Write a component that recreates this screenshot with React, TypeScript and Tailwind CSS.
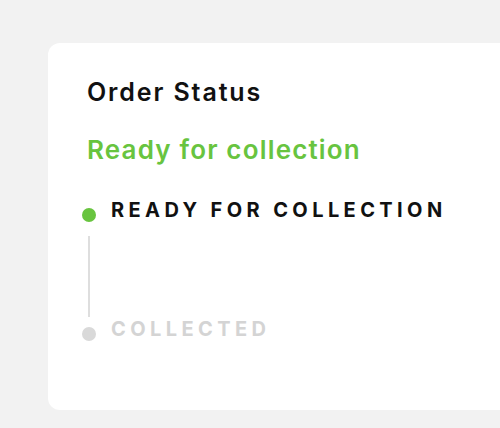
import React from 'react'

interface StepProps {
  label: string
  active?: boolean
}

const Step: React.FC<StepProps> = ({ label, active }) => {
  return (
    <div className="flex items-start gap-[15px]">
      <span
        className={
          active
            ? 'mt-[8px] h-[14px] w-[14px] shrink-0 rounded-full bg-[#68c43f]'
            : 'mt-[8px] h-[14px] w-[14px] shrink-0 rounded-full bg-[#d9d9d9]'
        }
      />
      <span
        className={
          active
            ? 'text-[20px] leading-[20px] font-bold tracking-[0.22em] text-[#111111]'
            : 'text-[20px] leading-[20px] font-bold tracking-[0.22em] text-[#d4d4d4]'
        }
      >
        {label}
      </span>
    </div>
  )
}

export default function App() {
  return (
    <div
      className="w-[500px] h-[428px] overflow-hidden bg-[#f2f2f2] pt-[43px] pl-[48px]"
      style={{ fontFamily: 'Inter, "Noto Sans", sans-serif' }}
    >
      <div className="w-[480px] h-[367px] rounded-[12px] bg-white pt-[37px] pl-[39px]">
        <h2 className="text-[25px] leading-[25px] font-semibold tracking-[0.075em] text-[#111111]">
          Order Status
        </h2>
        <p className="mt-[32px] text-[26px] leading-[26px] font-semibold tracking-[0.045em] text-[#68c43f]">
          Ready for collection
        </p>

        {/* timeline */}
        <div className="mt-[37px] -ml-[5px] flex flex-col">
          <Step label="READY FOR COLLECTION" active />
          <div className="ml-[6px] mt-[14px] h-[81px] w-[2px] bg-[#dedede]" />
          <div className="mt-[2px]">
            <Step label="COLLECTED" />
          </div>
        </div>
      </div>
    </div>
  )
}
